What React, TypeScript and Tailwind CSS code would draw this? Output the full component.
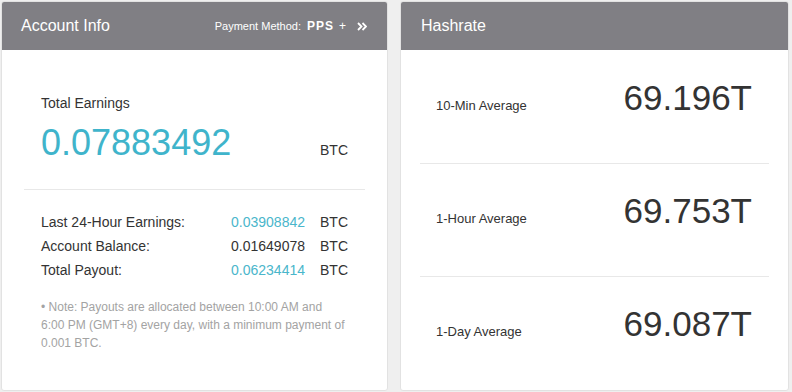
import React from "react";

const font = { fontFamily: '"Liberation Sans", Arial, sans-serif' };

const DoubleChevron = () => (
  <svg width="10" height="9" viewBox="0 0 10 9" fill="none" stroke="currentColor" strokeWidth={1.8} className="ml-[11px]">
    <path d="M1 1l3.5 3.5L1 8" />
    <path d="M5.5 1L9 4.5 5.5 8" />
  </svg>
);

const rows = [
  { label: "Last 24-Hour Earnings:", value: "0.03908842", teal: true },
  { label: "Account Balance:", value: "0.01649078", teal: false },
  { label: "Total Payout:", value: "0.06234414", teal: true },
];

const hashrates = [
  { label: "10-Min Average", value: "69.196T" },
  { label: "1-Hour Average", value: "69.753T" },
  { label: "1-Day Average", value: "69.087T" },
];

const App = () => {
  return (
    <div className="w-[792px] h-[392px] bg-[#efefef] pt-[1px] pl-[1px] pr-[3px] flex gap-[12px]" style={font}>
      {/* Account Info */}
      <div className="w-[387px] shrink-0 h-[390px] bg-white border border-[#e2e2e2] rounded-[3px] overflow-hidden">
        <div className="h-[48px] bg-[#807f84] flex items-center justify-between pl-[19px] pr-[20px] text-white">
          <span className="text-[16px] leading-[20px]">Account Info</span>
          <div className="flex items-center text-[11px]">
            <span>Payment Method:</span>
            <span className="ml-[6px] font-bold text-[12px] tracking-[1px]">PPS</span>
            <span className="ml-[5px] text-[12px]">+</span>
            <DoubleChevron />
          </div>
        </div>
        <div className="px-[22px]">
          <div className="px-[17px] pt-[43px] pb-[26px] border-b border-[#e8e8e8]">
            <div className="text-[14px] leading-[20px] text-[#333]">Total Earnings</div>
            <div className="mt-[10px] flex items-baseline justify-between">
              <span className="text-[36px] leading-[40px] text-[#3fb4cb]">0.07883492</span>
              <span className="text-[14px] text-[#333]">BTC</span>
            </div>
          </div>
          <div className="px-[17px] pt-[20px]">
            <div className="grid grid-cols-[1fr_auto_auto] text-[14px] leading-[24px] text-[#333]">
              {rows.map((r) => (
                <React.Fragment key={r.label}>
                  <span>{r.label}</span>
                  <span className={`text-right ${r.teal ? "text-[#4ab6cb]" : "text-[#333]"}`}>{r.value}</span>
                  <span className="ml-[15px]">BTC</span>
                </React.Fragment>
              ))}
            </div>
            <p className="mt-[16px] w-[304px] text-[12px] leading-[18px] text-[#a3a3a3]">
              • Note: Payouts are allocated between 10:00 AM and 6:00 PM (GMT+8) every day, with a minimum payment of 0.001 BTC.
            </p>
          </div>
        </div>
      </div>

      {/* Hashrate */}
      <div className="flex-1 h-[390px] bg-white border border-[#e2e2e2] rounded-[3px] overflow-hidden">
        <div className="h-[48px] bg-[#807f84] flex items-center pl-[20px] text-white">
          <span className="text-[16px] leading-[20px]">Hashrate</span>
        </div>
        <div className="px-[19px]">
          {hashrates.map((h, i) => (
            <div
              key={h.label}
              className={`h-[113px] pl-[16px] pr-[17px] flex items-baseline justify-between ${
                i === 0 ? "pt-[28px]" : "pt-[27px] border-t border-[#e8e8e8]"
              }`}
            >
              <span className="text-[13px] text-[#333]">{h.label}</span>
              <span className="text-[35px] leading-[40px] text-[#333]">{h.value}</span>
            </div>
          ))}
        </div>
      </div>
    </div>
  );
};

export default App;
